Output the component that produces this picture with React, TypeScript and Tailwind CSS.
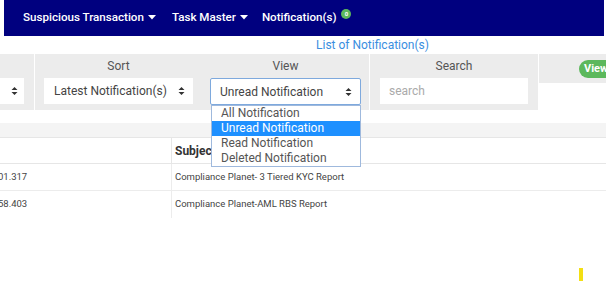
import React from "react";

function Caret() {
  return (
    <svg width="8" height="5" viewBox="0 0 8 5" className="ml-[4px] inline-block">
      <path d="M0 0 L8 0 L4 4.5 Z" fill="#ffffff" />
    </svg>
  );
}

function UpDown() {
  return (
    <svg width="7" height="10" viewBox="0 0 7 10">
      <path d="M3.5 1 L6.5 4 L0.5 4 Z M3.5 9 L6.5 6 L0.5 6 Z" fill="#333" />
    </svg>
  );
}

export default function App() {
  return (
    <div className="relative w-[606px] h-[282px] overflow-hidden bg-white font-['Roboto',sans-serif]">
      {/* Top nav */}
      <div className="ml-[4px] w-[600px] h-[36px] bg-[#00007f] flex items-center pl-[19px] text-[11.6px] font-medium text-white">
        <span className="flex items-center">Suspicious Transaction<Caret /></span>
        <span className="flex items-center ml-[16px]">Task Master<Caret /></span>
        <span className="flex items-center ml-[14px]">
          Notification(s)
          <span className="ml-[5px] -mt-[8px] w-[10px] h-[10px] rounded-full bg-[#5cb85c] text-[6px] leading-[10px] text-center font-bold">0</span>
        </span>
      </div>

      {/* Title */}
      <div className="h-[18px] pl-[316px] text-[12px] leading-[18px] text-[#3a8ee0]">List of Notification(s)</div>

      {/* Filter bar */}
      <div className="flex items-start">
        <div className="w-[35px] h-[56px] bg-[#ececec] border-r border-white pt-[24px]">
          <div className="w-[24px] h-[26px] bg-white flex items-center justify-end pr-[6px]">
            <UpDown />
          </div>
        </div>
        <div className="w-[167px] h-[56px] bg-[#ececec] flex flex-col items-center">
          <div className="h-[24px] leading-[24px] text-[12px] text-[#555]">Sort</div>
          <div className="w-[149px] h-[26px] bg-white flex items-center justify-between pl-[10px] pr-[8px] text-[12px] text-[#444]">
            <span>Latest Notification(s)</span>
            <UpDown />
          </div>
        </div>
        <div className="w-[168px] h-[56px] bg-[#ececec] border-r border-white flex flex-col items-center">
          <div className="h-[24px] leading-[24px] text-[12px] text-[#555]">View</div>
          <div className="w-[151px] h-[27px] bg-white border border-[#7ea9dd] rounded-[2px] flex items-center justify-between pl-[9px] pr-[8px] text-[12px] text-[#444]">
            <span>Unread Notification</span>
            <UpDown />
          </div>
        </div>
        <div className="w-[169px] h-[56px] bg-[#ececec] border-r border-white flex flex-col items-center">
          <div className="h-[24px] leading-[24px] text-[12px] text-[#555]">Search</div>
          <div className="w-[148px] h-[26px] bg-white flex items-center pl-[9px] text-[12px] text-[#aaa]">search</div>
        </div>
        <div className="flex-1 h-[29px] bg-[#ececec] pt-[6px] pl-[40px] overflow-hidden">
          <div className="w-[40px] h-[18px] rounded-full bg-[#5cb85c] text-white text-[11px] font-bold leading-[18px] pl-[5px]">View</div>
        </div>
      </div>

      {/* Table */}
      <div className="mt-[13px] h-[15px] bg-[#f4f4f4] border-b border-[#e6e6e6]" />
      <div className="flex h-[26px] border-b border-[#e6e6e6]">
        <div className="w-[172px] border-r border-[#e6e6e6]" />
        <div className="pl-[3px] flex items-center text-[12px] font-bold text-[#333]">Subject</div>
      </div>
      <div className="flex h-[27px] border-b border-[#ececec] text-[9.5px] text-[#444]">
        <div className="w-[172px] border-r border-[#ececec] flex items-center overflow-hidden">
          <span className="-ml-[2px]">01.317</span>
        </div>
        <div className="pl-[3px] flex items-center">Compliance Planet- 3 Tiered KYC Report</div>
      </div>
      <div className="flex h-[27px] text-[9.5px] text-[#444]">
        <div className="w-[172px] border-r border-[#ececec] flex items-center overflow-hidden">
          <span className="-ml-[2px]">58.403</span>
        </div>
        <div className="pl-[3px] flex items-center">Compliance Planet-AML RBS Report</div>
      </div>

      {/* Open dropdown list */}
      <div className="absolute left-[211px] top-[105px] w-[150px] bg-white border border-[#9fb9dd] text-[12px] leading-[15px] text-[#555]">
        <div className="pl-[9px]">All Notification</div>
        <div className="pl-[9px] bg-[#1e90ff] text-white">Unread Notification</div>
        <div className="pl-[9px]">Read Notification</div>
        <div className="pl-[9px]">Deleted Notification</div>
      </div>

      {/* Yellow mark */}
      <div className="absolute left-[579px] top-[268px] w-[4px] h-[13px] bg-[#f3df13]" />
    </div>
  );
}
